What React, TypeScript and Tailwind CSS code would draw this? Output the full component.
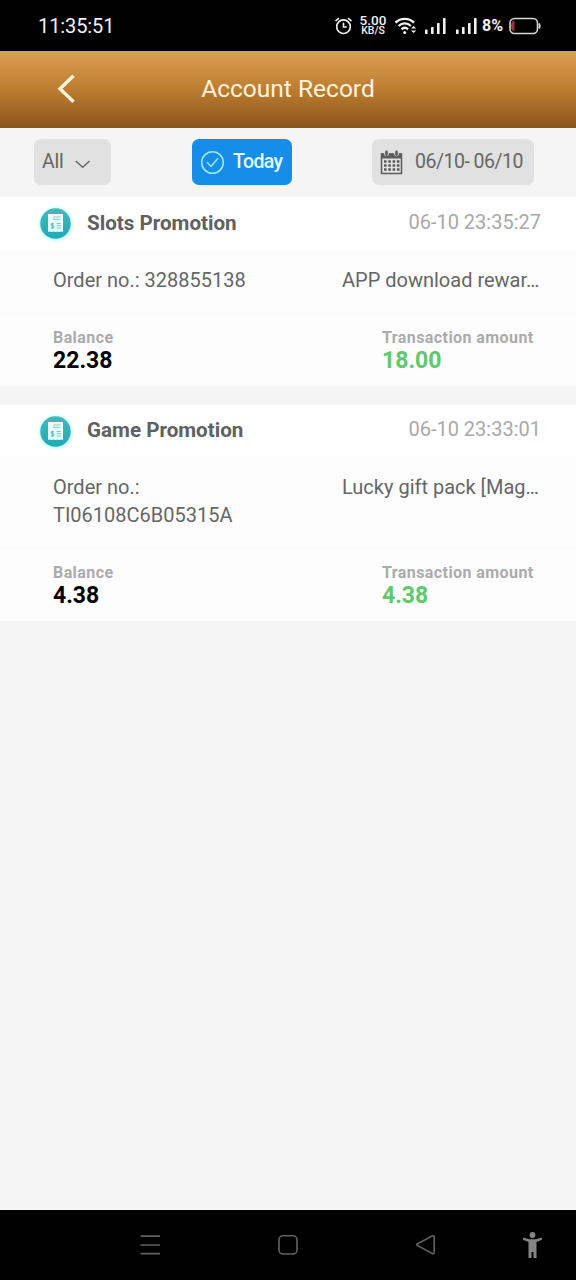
import React from "react";

type RecordItem = {
  title: string;
  time: string;
  order: string;
  detail: string;
  balance: string;
  amount: string;
};

const records: RecordItem[] = [
  {
    title: "Slots Promotion",
    time: "06-10 23:35:27",
    order: "328855138",
    detail: "APP download rewar…",
    balance: "22.38",
    amount: "18.00",
  },
  {
    title: "Game Promotion",
    time: "06-10 23:33:01",
    order: "TI06108C6B05315A",
    detail: "Lucky gift pack [Mag…",
    balance: "4.38",
    amount: "4.38",
  },
];

function SignalIcon({ className }: { className: string }) {
  return (
    <svg className={className} width="22" height="18" viewBox="0 0 22 18" fill="#f2f2f2">
      <rect x="0" y="12.5" width="2.6" height="4.5" rx="0.6" />
      <rect x="6" y="10" width="2.6" height="7" rx="0.6" />
      <rect x="12" y="6" width="2.6" height="11" rx="0.6" />
      <rect x="18" y="1" width="2.6" height="16" rx="0.6" />
    </svg>
  );
}

function StatusBar() {
  return (
    <div className="flex h-[51px] shrink-0 items-center bg-black pl-[38px] text-[#f2f2f2]">
      <span className="w-[296px] text-[20px] leading-[24px] tracking-[-0.1px]">11:35:51</span>
      <svg width="18" height="18" viewBox="0 0 18 18" fill="none" stroke="#f2f2f2" strokeWidth="1.6" strokeLinecap="round">
        <circle cx="9.5" cy="9.7" r="6.8" />
        <path d="M9.5 6.3v3.7h2.6M2 3.6l2.4-2M17 3.6l-2.4-2" />
      </svg>
      <div className="ml-[6px] flex w-[30px] flex-col items-center font-medium">
        <span className="text-[13.5px] leading-[11px]">5.00</span>
        <span className="text-[10.5px] leading-[10px]">KB/S</span>
      </div>
      <svg className="ml-[6px]" width="24" height="20" viewBox="0 0 24 20" fill="none" stroke="#f2f2f2" strokeWidth="2.3">
        <path d="M1.5 6.6c5.2-5 13.300-5 18.500 0M4.600 10c3.500-3.400 8.800-3.400 12.300 0M7.500 13.300c1.900-1.800 4.600-1.800 6.500 0" />
        <circle cx="10.700" cy="16.500" r="1.500" fill="#f2f2f2" stroke="none" />
        <path d="m17 12.600 2.600-2.700 2.600 2.700zM17 14.400l2.600 2.700 2.600-2.700z" fill="#f2f2f2" stroke="none" />
      </svg>
      <SignalIcon className="ml-[7px]" />
      <SignalIcon className="ml-[9px]" />
      <span className="ml-[4px] w-[27px] text-[16px] leading-[20px] font-bold">8%</span>
      <svg width="32" height="18" viewBox="0 0 32 18">
        <path d="M5.500 3.500Q2 4 2 9t3.500 5.500z" fill="#a33247" />
        <rect x="1" y="1.500" width="27.500" height="15" rx="4.500" fill="none" stroke="#d8d8d8" strokeWidth="1.600" />
        <path d="M30 6.500q1.500 2.500 0 5" fill="none" stroke="#d8d8d8" strokeWidth="1.800" />
      </svg>
    </div>
  );
}

function Header() {
  return (
    <header className="grid h-[77px] shrink-0 grid-cols-[201px_174px_1fr] items-center bg-linear-to-b from-[#dda14f] via-[#bc7d31] to-[#8b551b] pb-[2px] text-[#fff3df]">
      <svg className="ml-[57px]" width="20" height="32" viewBox="0 0 20 32" fill="none" stroke="#fff4dc" strokeWidth="3.400">
        <path d="M16.500 2.800 3 15.800l13.500 13" />
      </svg>
      <h1 className="text-center text-[24.5px] leading-[30px] whitespace-nowrap">Account Record</h1>
    </header>
  );
}

function Filters() {
  return (
    <div className="flex h-[69px] shrink-0 pt-[11px] text-[19.5px] text-[#666]">
      <button className="ml-[34px] flex h-[46px] w-[77px] items-center rounded-[7px] bg-[#e1e1e1] pl-[8px]">
        <span className="w-[33px] text-left tracking-[-0.2px]">All</span>
        <svg className="mt-[3px]" width="16" height="10" viewBox="0 0 16 10" fill="none" stroke="#666" strokeWidth="1.500">
          <path d="m.8 2 6.900 6.200L14.600 2" />
        </svg>
      </button>
      <button className="ml-[81px] flex h-[46px] w-[100px] items-center rounded-[7px] bg-[#168de8] pl-[8px] text-[#e6fbff]">
        <svg width="25" height="25" viewBox="0 0 25 25" fill="none" stroke="#9eeaff" strokeWidth="1.500">
          <circle cx="12.500" cy="12.500" r="10.800" />
          <path d="m7 12.300 4 4.200 7-8.300" />
        </svg>
        <span className="ml-[8px] font-medium tracking-[-0.6px]">Today</span>
      </button>
      <button className="ml-[80px] flex h-[46px] w-[162px] items-center rounded-[7px] bg-[#e1e1e1] pl-[8px]">
        <svg width="24" height="26" viewBox="0 0 24 26" fill="none" stroke="#5c5c5c">
          <path d="M1.500 5h20v19.500h-20z" strokeWidth="1.500" />
          <path d="M1 4.500h21v5H1z" fill="#5c5c5c" stroke="none" />
          <path d="M6.500 3v2M16.500 3v2" stroke="#e1e1e1" strokeWidth="4.600" strokeLinecap="round" />
          <path d="M6.500 2.700v3M16.500 2.700v3" strokeWidth="2.600" strokeLinecap="round" />
          <path d="M4 12.500h15.500M4 16.500h15.500M4 20.500h15.500" strokeWidth="2.500" strokeDasharray="2.600 1.700" />
        </svg>
        <span className="ml-[11px] whitespace-nowrap tracking-[-0.5px]">06/10- 06/10</span>
      </button>
    </div>
  );
}

function ReceiptIcon() {
  return (
    <svg className="ml-[35px] shrink-0" width="41" height="41" viewBox="0 0 41 41" fill="none">
      <defs>
        <radialGradient id="receipt-glow">
          <stop offset="0.7" stopColor="#83fff4" stopOpacity="0.8" />
          <stop offset="1" stopColor="#b9ffff" stopOpacity="0" />
        </radialGradient>
        <linearGradient id="receipt-fill" x2="0" y2="1">
          <stop stopColor="#42bbb8" />
          <stop offset="1" stopColor="#20a9b4" />
        </linearGradient>
      </defs>
      <circle cx="20.500" cy="21" r="19" fill="url(#receipt-glow)" />
      <circle cx="20.500" cy="20.500" r="15.200" fill="url(#receipt-fill)" />
      <path d="M13 11h15v18l-1.900-.6-1.900.6-1.900-.6-1.900.6-1.900-.6-1.900.6-1.900-.6-1.700.6z" fill="#ebffff" />
      <path d="M18 14h7.500M18 16.300h7.500M21.500 20.500h4.500M21.500 22.700h4.500M21.500 25h4.500" stroke="#6cc9cb" strokeWidth="0.900" />
      <path d="M19 20.800h-2.800v2h2.600v2.200h-2.900M17.500 19.700v6.400" stroke="#4bbdc0" strokeWidth="0.900" />
    </svg>
  );
}

function RecordCard({ item, compact }: { item: RecordItem; compact: boolean }) {
  return (
    <article className="bg-[#fdfdfd]">
      <div className={`flex items-center bg-white ${compact ? "h-[52px]" : "h-[53px]"}`}>
        <ReceiptIcon />
        <h2 className="mb-[2px] ml-[11px] text-[20.6px] leading-[26px] font-bold text-[#606060]">{item.title}</h2>
        <time className="mr-[35px] mb-[4px] ml-auto text-[20px] leading-[26px] text-[#a9a9a9]">{item.time}</time>
      </div>
      <div className="flex items-start justify-between pt-[16px] pr-[36px] pb-[19px] pl-[53px] text-[20px] leading-[28px] text-[#666]">
        <p className="w-[200px]">Order no.: {item.order}</p>
        <p className="w-[198px] whitespace-nowrap">{item.detail}</p>
      </div>
      <div className="grid h-[73px] grid-cols-[329px_1fr] border-t border-[#fafafa] pt-[14px] pl-[53px] font-bold">
        <div>
          <p className="text-[16px] leading-[20px] tracking-[0.42px] text-[#ababab]">Balance</p>
          <p className="text-[23px] leading-[26px] text-black">{item.balance}</p>
        </div>
        <div>
          <p className="text-[16px] leading-[20px] tracking-[0.42px] text-[#ababab]">Transaction amount</p>
          <p className="text-[23px] leading-[26px] text-[#5fc96d]">{item.amount}</p>
        </div>
      </div>
    </article>
  );
}

function NavigationBar() {
  return (
    <nav className="flex h-[70px] shrink-0 items-center bg-black pl-[140px]">
      <svg width="21" height="22" viewBox="0 0 21 22" stroke="#626262" strokeWidth="1.700">
        <path d="M.5 2.200h19.500M.5 11h19.500M.5 19.700h19.500" />
      </svg>
      <svg className="ml-[117px]" width="20" height="22" viewBox="0 0 20 22" fill="none" stroke="#626262" strokeWidth="1.600">
        <rect x="1" y="1.800" width="18" height="18.200" rx="4" />
      </svg>
      <svg className="ml-[117px]" width="22" height="22" viewBox="0 0 22 22" fill="none" stroke="#626262" strokeWidth="1.600">
        <path d="m2.200 10 15-8q2-.8 2 1.200v15q0 2-2 1.200l-15-8q-1.300-.7 0-1.400z" />
      </svg>
      <svg className="ml-[85px]" width="21" height="28" viewBox="0 0 21 28" fill="#858585">
        <circle cx="10.500" cy="4" r="2.900" />
        <path d="M1.500 6.500 7 8.200h7l5.500-1.700.6 2.300-5.600 2.100V27h-3v-6h-2v6h-3V10.900L.9 8.800z" />
      </svg>
    </nav>
  );
}

export default function App() {
  return (
    <div className="flex h-[1280px] w-[576px] flex-col overflow-hidden bg-[#f5f5f5] font-['Roboto',sans-serif]">
      <StatusBar />
      <Header />
      <Filters />
      <main className="flex flex-1 flex-col gap-[19px]">
        {records.map((item, index) => (
          <RecordCard key={item.order} item={item} compact={index > 0} />
        ))}
      </main>
      <NavigationBar />
    </div>
  );
}
